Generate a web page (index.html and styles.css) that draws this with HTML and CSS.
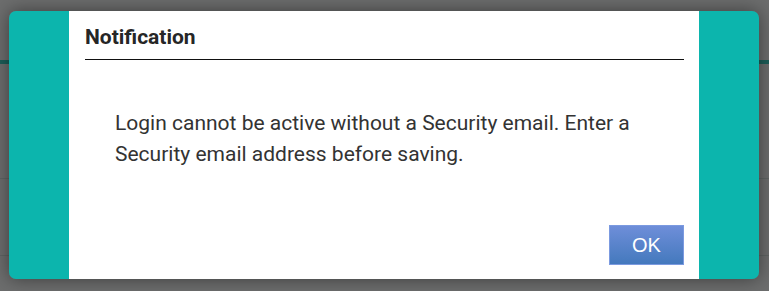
FILE: index.html
```html
<!DOCTYPE html>
<html lang="en">
<head>
  <meta charset="UTF-8">
  <meta name="viewport" content="width=device-width, initial-scale=1.0">
  <title>Notification</title>
  <link rel="stylesheet" href="styles.css">
</head>
<body>

<!-- Faded page behind the dialog -->
<div class="backdrop">
  <div class="backdrop-bar"></div>
  <div class="backdrop-row row1"></div>
  <div class="backdrop-row row2"></div>
</div>

<div class="dialog">
  <div class="dialog-side"></div>
  <div class="dialog-main">
    <h2 class="dialog-title">Notification</h2>
    <p class="dialog-message">Login cannot be active without a Security email. Enter a Security email address before saving.</p>
    <div class="dialog-actions">
      <button class="ok-button">OK</button>
    </div>
  </div>
  <div class="dialog-side"></div>
</div>

</body>
</html>
```

FILE: styles.css
```css
html, body {
  margin: 0;
  height: 100%;
}

body {
  font-family: Roboto, "Liberation Sans", Arial, sans-serif;
  background-color: #6c6d6d;
  position: relative;
  overflow: hidden;
}

.backdrop {
  position: absolute;
  inset: 0;
}

.backdrop-bar {
  position: absolute;
  top: 60px;
  left: 0;
  right: 0;
  height: 4px;
  background-color: #1d5e59;
}

.backdrop-row {
  position: absolute;
  left: 0;
  right: 0;
  height: 1px;
  background-color: #5f6463;
}

.row1 { top: 178px; }
.row2 { top: 255px; }

.dialog {
  position: absolute;
  top: 11px;
  left: 9px;
  width: 750px;
  height: 268px;
  display: flex;
  border-radius: 7px;
  overflow: hidden;
  box-shadow: 0 0 18px rgba(0, 0, 0, 0.45);
}

.dialog-side {
  width: 60px;
  background-color: #0cb5ad;
}

.dialog-main {
  flex: 1;
  background-color: #fff;
  padding: 0 15px 14px 16px;
  display: flex;
  flex-direction: column;
}

.dialog-title {
  margin: 0;
  padding: 13px 0 9px;
  font-size: 21px;
  line-height: 26px;
  font-weight: bold;
  color: #262626;
  border-bottom: 1px solid #111;
}

.dialog-message {
  margin: 0;
  padding: 48px 40px 0 30px;
  font-size: 21px;
  line-height: 31px;
  color: #333;
}

.dialog-actions {
  margin-top: auto;
  display: flex;
  justify-content: flex-end;
}

.ok-button {
  width: 75px;
  height: 40px;
  font-family: "Liberation Sans", Arial, sans-serif;
  font-size: 20px;
  color: white;
  border: 1px solid #7b9ae0;
  background: linear-gradient(#6e8ed9, #4479bd);
  cursor: pointer;
}
```
